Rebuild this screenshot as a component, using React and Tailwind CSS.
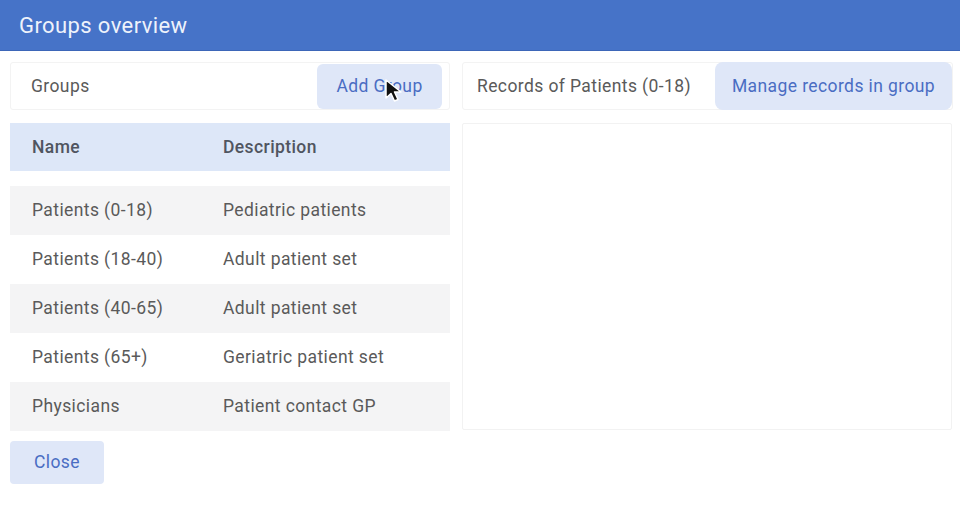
import React from 'react';

const groups = [
  { name: 'Patients (0-18)', description: 'Pediatric patients' },
  { name: 'Patients (18-40)', description: 'Adult patient set' },
  { name: 'Patients (40-65)', description: 'Adult patient set' },
  { name: 'Patients (65+)', description: 'Geriatric patient set' },
  { name: 'Physicians', description: 'Patient contact GP' },
];

const Cursor = () => (
  <svg width="22" height="26" viewBox="0 0 22 26" className="absolute left-[384px] top-[78px]">
    <path d="M2 2 L2 20 L7 15.5 L10.5 23 L14 21.5 L10.5 14 L17 14 Z" fill="#111" stroke="#fff" strokeWidth="1.5" strokeLinejoin="round" />
  </svg>
);

export default function App() {
  return (
    <div className="relative w-[960px] h-[518px] bg-white font-['Roboto',sans-serif] text-[17.5px] tracking-[0.4px] text-[#5a5a5a]">
      <div className="h-[51px] bg-[#4673c8] border-b border-[#3d66b8] flex items-center px-[19px]">
        <h1 className="text-[22px] text-[#eef2fb]">Groups overview</h1>
      </div>

      <div className="flex gap-[12px] pl-[10px] pr-[7px] pt-[11px]">
        <div className="w-[440px] shrink-0 flex flex-col">
          <div className="h-[48px] flex items-center justify-between pl-[20px] pr-[7px] border border-[#f3f3f3] rounded-[3px]">
            <span>Groups</span>
            <button className="h-[45px] w-[125px] rounded-[6px] bg-[#dfe7f8] text-[#4a6dc3]">Add Group</button>
          </div>

          <div className="mt-[13px] h-[48px] bg-[#dde7f8] flex items-center px-[22px] font-medium text-[#505560]">
            <span className="w-[191px]">Name</span>
            <span>Description</span>
          </div>

          <div className="mt-[15px]">
            {groups.map((g, i) => (
              <div
                key={g.name}
                className={`h-[49px] flex items-center px-[22px] ${i % 2 === 0 ? 'bg-[#f4f4f5]' : 'bg-white'}`}
              >
                <span className="w-[191px]">{g.name}</span>
                <span>{g.description}</span>
              </div>
            ))}
          </div>

          <div className="mt-[10px]">
            <button className="h-[43px] w-[94px] rounded-[4px] bg-[#dfe7f8] text-[#4a6dc3]">Close</button>
          </div>
        </div>

        <div className="w-[491px] shrink-0 flex flex-col">
          <div className="h-[48px] flex items-center justify-between pl-[14px] border border-[#f3f3f3] rounded-[3px]">
            <span>Records of Patients (0-18)</span>
            <button className="h-[48px] w-[237px] rounded-[8px] bg-[#dfe7f8] text-[#4a6dc3]">Manage records in group</button>
          </div>
          <div className="mt-[13px] mr-[1px] h-[307px] border border-[#f2f2f2] rounded-[2px] bg-white"></div>
        </div>
      </div>

      <Cursor />
    </div>
  );
}
